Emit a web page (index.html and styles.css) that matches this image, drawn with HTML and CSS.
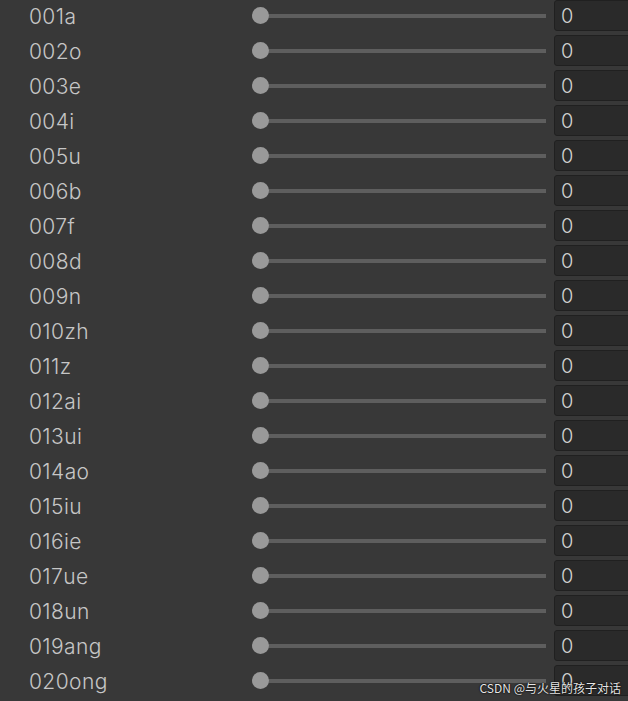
FILE: index.html
```html
<!DOCTYPE html>
<html lang="zh">
<head>
    <meta charset="UTF-8">
    <title>BlendShapes</title>
    <link rel="stylesheet" href="styles.css">
</head>
<body>
    <div class="list">
        <div class="row"><span class="label">001a</span><div class="slider"><div class="track"></div><div class="thumb"></div></div><div class="field">0</div></div>
        <div class="row"><span class="label">002o</span><div class="slider"><div class="track"></div><div class="thumb"></div></div><div class="field">0</div></div>
        <div class="row"><span class="label">003e</span><div class="slider"><div class="track"></div><div class="thumb"></div></div><div class="field">0</div></div>
        <div class="row"><span class="label">004i</span><div class="slider"><div class="track"></div><div class="thumb"></div></div><div class="field">0</div></div>
        <div class="row"><span class="label">005u</span><div class="slider"><div class="track"></div><div class="thumb"></div></div><div class="field">0</div></div>
        <div class="row"><span class="label">006b</span><div class="slider"><div class="track"></div><div class="thumb"></div></div><div class="field">0</div></div>
        <div class="row"><span class="label">007f</span><div class="slider"><div class="track"></div><div class="thumb"></div></div><div class="field">0</div></div>
        <div class="row"><span class="label">008d</span><div class="slider"><div class="track"></div><div class="thumb"></div></div><div class="field">0</div></div>
        <div class="row"><span class="label">009n</span><div class="slider"><div class="track"></div><div class="thumb"></div></div><div class="field">0</div></div>
        <div class="row"><span class="label">010zh</span><div class="slider"><div class="track"></div><div class="thumb"></div></div><div class="field">0</div></div>
        <div class="row"><span class="label">011z</span><div class="slider"><div class="track"></div><div class="thumb"></div></div><div class="field">0</div></div>
        <div class="row"><span class="label">012ai</span><div class="slider"><div class="track"></div><div class="thumb"></div></div><div class="field">0</div></div>
        <div class="row"><span class="label">013ui</span><div class="slider"><div class="track"></div><div class="thumb"></div></div><div class="field">0</div></div>
        <div class="row"><span class="label">014ao</span><div class="slider"><div class="track"></div><div class="thumb"></div></div><div class="field">0</div></div>
        <div class="row"><span class="label">015iu</span><div class="slider"><div class="track"></div><div class="thumb"></div></div><div class="field">0</div></div>
        <div class="row"><span class="label">016ie</span><div class="slider"><div class="track"></div><div class="thumb"></div></div><div class="field">0</div></div>
        <div class="row"><span class="label">017ue</span><div class="slider"><div class="track"></div><div class="thumb"></div></div><div class="field">0</div></div>
        <div class="row"><span class="label">018un</span><div class="slider"><div class="track"></div><div class="thumb"></div></div><div class="field">0</div></div>
        <div class="row"><span class="label">019ang</span><div class="slider"><div class="track"></div><div class="thumb"></div></div><div class="field">0</div></div>
        <div class="row"><span class="label">020ong</span><div class="slider"><div class="track"></div><div class="thumb"></div></div><div class="field">0</div></div>
    </div>

    <div class="watermark">CSDN @与火星的孩子对话</div>
</body>
</html>
```

FILE: styles.css
```css
* {
    margin: 0;
    padding: 0;
    box-sizing: border-box;
}

html, body {
    height: 100%;
    overflow: hidden;
}

body {
    background-color: #383838;
    font-family: Inter, "Noto Sans", sans-serif;
    color: #c6c6c6;
}

.list {
    margin-top: -2px;
    display: flex;
    flex-direction: column;
}

.row {
    height: 35px;
    display: flex;
    align-items: center;
    padding-left: 29px;
}

.label {
    width: 223px;
    flex-shrink: 0;
    font-size: 21px;
    font-weight: 300;
    letter-spacing: 0.4px;
    padding-top: 2px;
}

.slider {
    width: 294px;
    height: 17px;
    flex-shrink: 0;
    display: flex;
    align-items: center;
    position: relative;
}

.track {
    width: 100%;
    height: 4px;
    background-color: #5e5e5e;
}

.thumb {
    position: absolute;
    left: 0;
    top: 0;
    width: 17px;
    height: 17px;
    border-radius: 50%;
    background-color: #999999;
}

.field {
    margin-left: 8px;
    width: 90px;
    height: 31px;
    flex-shrink: 0;
    background-color: #2a2a2a;
    border: 1px solid #202020;
    border-radius: 3px;
    padding-left: 6px;
    display: flex;
    align-items: center;
    font-size: 20px;
    font-weight: 300;
    color: #d2d2d2;
}

.watermark {
    position: absolute;
    right: 7px;
    bottom: 5px;
    font-family: "Noto Sans CJK SC", "Noto Sans", sans-serif;
    font-size: 12px;
    color: #e6e6e6;
    text-shadow: 0 0 2px #000, 0 0 1px #000;
}
```
